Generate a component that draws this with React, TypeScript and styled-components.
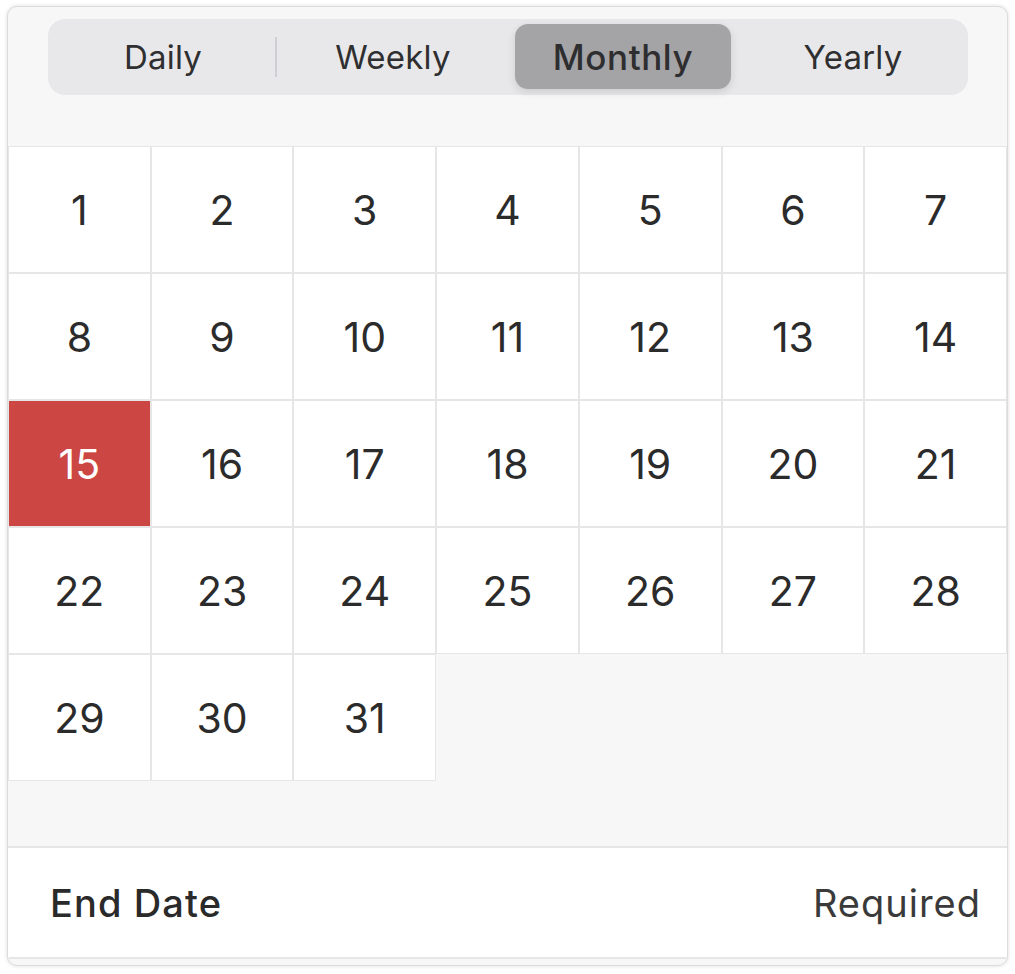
import React from "react";
import styled, { createGlobalStyle } from "styled-components";

const Global = createGlobalStyle`
  html, body { margin: 0; padding: 0; background: #ffffff; }
  body { font-family: Inter, "Noto Sans", "Liberation Sans", sans-serif; -webkit-font-smoothing: antialiased; }
`;

const Page = styled.div`
  padding: 6px 7px 7px 7px;
  width: 1001px;
`;

const Card = styled.div`
  width: 1001px;
  box-sizing: border-box;
  background: #f7f7f7;
  border: 1px solid #dcdcdc;
  border-radius: 10px;
  box-shadow: 0 0 4px rgba(0, 0, 0, 0.14);
  overflow: hidden;
  display: flex;
  flex-direction: column;
`;

const Segmented = styled.div`
  margin: 12px 39px 0 40px;
  height: 76px;
  background: #e8e8ea;
  border-radius: 17px;
  display: grid;
  grid-template-columns: repeat(4, 1fr);
  align-items: center;
`;

const Segment = styled.div<{ $active?: boolean; $divider?: boolean }>`
  position: relative;
  height: 100%;
  display: flex;
  align-items: center;
  justify-content: center;
  font-size: ${(p) => (p.$active ? "35px" : "33px")};
  font-weight: ${(p) => (p.$active ? 540 : 400)};
  color: ${(p) => (p.$active ? "#2e2e30" : "#2f2f31")};
  letter-spacing: ${(p) => (p.$active ? "0.6px" : "0.2px")};
  &::before {
    content: "";
    display: ${(p) => (p.$active ? "block" : "none")};
    position: absolute;
    left: 7px;
    right: 7px;
    top: 5px;
    bottom: 6px;
    background: #a4a3a6;
    border-radius: 13px;
    box-shadow: 0 3px 8px rgba(0, 0, 0, 0.12);
  }
  &::after {
    content: "";
    display: ${(p) => (p.$divider ? "block" : "none")};
    position: absolute;
    right: 1px;
    top: 18px;
    bottom: 18px;
    width: 2px;
    background: #cfcfd3;
  }
`;

const Label = styled.span`
  position: relative;
`;

const Grid = styled.div`
  margin-top: 51px;
  display: grid;
  grid-template-columns: repeat(7, 1fr);
  grid-auto-rows: 127px;
`;

const Day = styled.div<{ $selected?: boolean }>`
  box-sizing: border-box;
  border: 1px solid #e6e6e6;
  background: ${(p) => (p.$selected ? "#cc4643" : "#ffffff")};
  color: ${(p) => (p.$selected ? "#ffffff" : "#2b2b2b")};
  display: flex;
  align-items: center;
  justify-content: center;
  font-size: 41px;
  font-weight: 400;
  padding-top: 1px;
`;

const Spacer = styled.div`
  height: 65px;
`;

const Footer = styled.div`
  height: 109px;
  background: #ffffff;
  border-top: 2px solid #e6e6e6;
  border-bottom: 2px solid #e6e6e6;
  margin-bottom: 6px;
  display: flex;
  align-items: center;
  justify-content: space-between;
  padding: 0 26px 0 42px;
`;

const FooterTitle = styled.span`
  font-size: 38px;
  font-weight: 450;
  color: #2a2a2a;
  letter-spacing: 1.1px;
`;

const FooterValue = styled.span`
  font-size: 38px;
  font-weight: 400;
  color: #3a3a3a;
  letter-spacing: 1px;
`;

const segments = ["Daily", "Weekly", "Monthly", "Yearly"];
const days = Array.from({ length: 31 }, (_, i) => i + 1);

export default function App() {
  return (
    <>
      <Global />
      <Page>
        <Card>
          <Segmented>
            {segments.map((s, i) => (
              <Segment key={s} $active={s === "Monthly"} $divider={i === 0}>
                <Label>{s}</Label>
              </Segment>
            ))}
          </Segmented>
          <Grid>
            {days.map((d) => (
              <Day key={d} $selected={d === 15}>
                {d}
              </Day>
            ))}
          </Grid>
          <Spacer />
          <Footer>
            <FooterTitle>End Date</FooterTitle>
            <FooterValue>Required</FooterValue>
          </Footer>
        </Card>
      </Page>
    </>
  );
}
